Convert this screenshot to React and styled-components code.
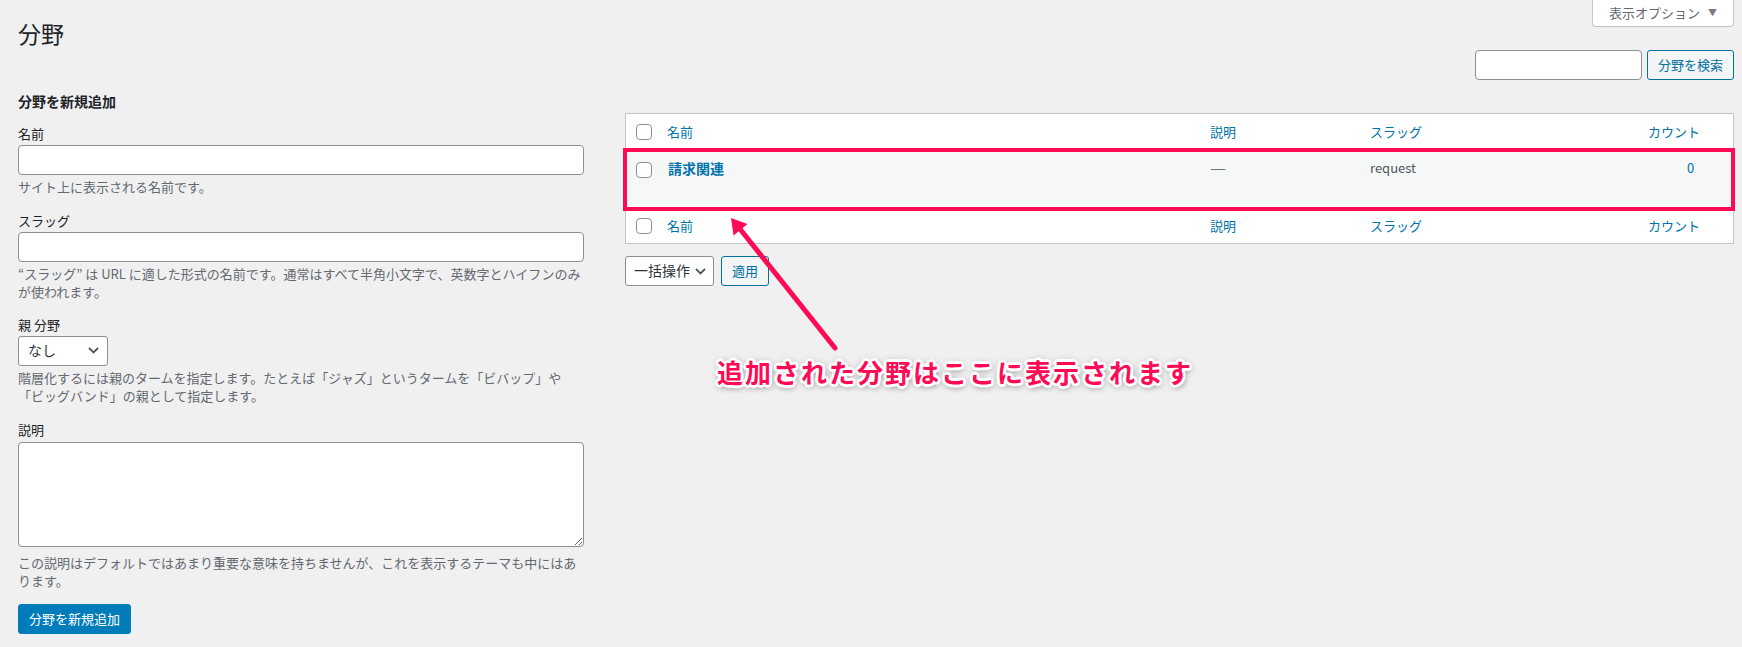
import React from 'react'
import styled, { createGlobalStyle } from 'styled-components'

const GlobalStyle = createGlobalStyle`
  html,
  body {
    margin: 0;
    padding: 0;
  }

  body {
    background: #f0f0f1;
    color: #3c434a;
    font-family: 'Noto Sans CJK JP', 'Noto Sans', sans-serif;
    font-size: 13px;
    line-height: 1.4;
  }

  * {
    box-sizing: border-box;
  }
`

const Page = styled.div`
  display: flex;
  gap: 41px;
  width: 1742px;
  height: 647px;
  padding: 0 8px 0 18px;
  overflow: hidden;
`

// left side: add-new form
const FormColumn = styled.div`
  flex: none;
  width: 566px;
  padding-top: 18px;
`

const Title = styled.h1`
  margin: 0;
  font-size: 23px;
  font-weight: 400;
  line-height: 30px;
  color: #1d2327;
`

const FormHeading = styled.h2`
  margin: 43px 0 0;
  font-size: 14px;
  font-weight: 700;
  line-height: 20px;
  color: #1d2327;
`

const Field = styled.div`
  margin-top: ${p => p.$top}px;
`

const Label = styled.label`
  display: block;
  margin-bottom: ${p => p.$gap || 1}px;
  line-height: 20px;
  color: #1d2327;
`

const TextInput = styled.input`
  display: block;
  width: 100%;
  height: 30px;
  padding: 0 8px;
  border: 1px solid #8c8f94;
  border-radius: 4px;
  background: #fff;
  font: inherit;
`

const TextArea = styled.textarea`
  display: block;
  width: 100%;
  height: 105px;
  padding: 6px 8px;
  border: 1px solid #8c8f94;
  border-radius: 4px;
  background: #fff;
  font: inherit;
  resize: vertical;
`

const Hint = styled.p`
  margin: ${p => (p.$top === undefined ? 3 : p.$top)}px 0 0;
  color: #646970;
  line-height: 18.5px;
  white-space: nowrap;
`

const Dropdown = styled.div`
  display: flex;
  align-items: center;
  justify-content: space-between;
  width: ${p => p.$width}px;
  height: 30px;
  padding: 0 ${p => p.$right || 8}px 0 ${p => p.$left || 9}px;
  border: 1px solid #8c8f94;
  border-radius: 3px;
  background: #fff;
  color: #2c3338;
  font-size: 14px;
`

const PrimaryButton = styled.button`
  margin-top: 13px;
  height: 30px;
  padding: 0 10px;
  border: 1px solid #007cba;
  border-radius: 3px;
  background: #007cba;
  color: #fff;
  font: inherit;
  line-height: 28px;
`

const SecondaryButton = styled.button`
  height: 30px;
  padding: 0 10px;
  border: 1px solid #0071a1;
  border-radius: 3px;
  background: #f3f5f6;
  color: #0071a1;
  font: inherit;
  line-height: 28px;
`

// right side: list
const ListColumn = styled.div`
  position: relative;
  flex: none;
  width: 1109px;
`

const TopBar = styled.div`
  display: flex;
  justify-content: flex-end;
`

const ScreenOptions = styled.button`
  display: flex;
  align-items: center;
  gap: 8px;
  height: 27px;
  padding: 0 16px;
  border: 1px solid #c3c4c7;
  border-top: none;
  border-radius: 0 0 4px 4px;
  background: #fff;
  color: #646970;
  font: inherit;

  span {
    font-size: 9px;
    color: #787c82;
  }
`

const SearchBox = styled.div`
  display: flex;
  justify-content: flex-end;
  gap: 5px;
  margin-top: 23px;

  input {
    width: 167px;
  }
`

const Table = styled.div`
  position: relative;
  margin-top: 33px;
  border: 1px solid #c3c4c7;
  background: #fff;
`

const Row = styled.div`
  display: grid;
  grid-template-columns: 31px 543px 160px 278px 1fr;
  align-items: ${p => (p.$body ? 'start' : 'center')};
  height: ${p => p.$height}px;
  padding-top: ${p => (p.$body ? 8 : 0)}px;
  background: ${p => (p.$body ? '#f6f7f7' : '#fff')};
  border-bottom: ${p => (p.$head ? '1px solid #c3c4c7' : 'none')};
  border-top: ${p => (p.$foot ? '1px solid #c3c4c7' : 'none')};
  line-height: 20px;
`

const Cell = styled.div`
  padding-left: ${p => p.$pad || 10}px;
  color: ${p => p.$color || '#50575e'};
  text-align: ${p => p.$align || 'left'};
`

const Dash = styled.span`
  display: inline-block;
  transform: scaleX(1.4);
  transform-origin: left center;
`

const Checkbox = styled.span`
  display: block;
  width: 16px;
  height: 16px;
  margin-top: ${p => p.$top || 0}px;
  border: 1px solid #8c8f94;
  border-radius: 4px;
  background: #fff;
`

const RowTitle = styled.a`
  font-size: 14px;
  font-weight: 700;
  color: #0073aa;
`

const BulkBar = styled.div`
  display: flex;
  gap: 7px;
  margin-top: 12px;
`

const Highlight = styled.div`
  position: absolute;
  top: 34px;
  left: -3px;
  width: 1112px;
  height: 63px;
  border: 4px solid #ff0a54;
  pointer-events: none;
`

const Arrow = styled.svg`
  position: absolute;
  left: 95px;
  top: 205px;
  overflow: visible;
`

const Callout = styled.div`
  position: absolute;
  left: 92px;
  top: 357px;
  font-size: 26px;
  font-weight: 700;
  line-height: 30px;
  letter-spacing: 2px;
  white-space: nowrap;
  color: #ff0a54;
  text-shadow:
    2px 0 0 #fff, -2px 0 0 #fff, 0 2px 0 #fff, 0 -2px 0 #fff,
    2px 2px 0 #fff, -2px -2px 0 #fff, 2px -2px 0 #fff, -2px 2px 0 #fff,
    3px 0 1px #fff, -3px 0 1px #fff, 0 3px 1px #fff, 0 -3px 1px #fff,
    1px 2px 6px rgba(0, 0, 0, 0.6), 0 0 8px rgba(0, 0, 0, 0.3);
`

const Chevron = () => (
  <svg width="11" height="7" viewBox="0 0 11 7">
    <path d="M1 1l4.5 4.5L10 1" fill="none" stroke="#50575e" strokeWidth="1.8" />
  </svg>
)

const columns = [
  { key: 'name', label: '名前' },
  { key: 'desc', label: '説明' },
  { key: 'slug', label: 'スラッグ' },
  { key: 'count', label: 'カウント' },
]

const HeaderRow = ({ foot }) => (
  <Row $height={foot ? 35 : 36} $head={!foot} $foot={foot}>
    <Cell>
      <Checkbox />
    </Cell>
    {columns.map(col => (
      <Cell key={col.key} $color="#0073aa">
        {col.label}
      </Cell>
    ))}
  </Row>
)

const App = () => (
  <>
    <GlobalStyle />
    <Page>
      <FormColumn>
        <Title>分野</Title>
        <FormHeading>分野を新規追加</FormHeading>

        <Field $top={13}>
          <Label>名前</Label>
          <TextInput type="text" />
          <Hint>サイト上に表示される名前です。</Hint>
        </Field>

        <Field $top={14}>
          <Label>スラッグ</Label>
          <TextInput type="text" />
          <Hint>
            “スラッグ” は URL に適した形式の名前です。通常はすべて半角小文字で、英数字とハイフンのみ
            <br />
            が使われます。
          </Hint>
        </Field>

        <Field $top={13}>
          <Label>親 分野</Label>
          <Dropdown $width={90}>
            なし
            <Chevron />
          </Dropdown>
          <Hint>
            階層化するには親のタームを指定します。たとえば「ジャズ」というタームを「ビバップ」や
            <br />
            「ビッグバンド」の親として指定します。
          </Hint>
        </Field>

        <Field $top={14}>
          <Label $gap={2}>説明</Label>
          <TextArea />
          <Hint $top={7}>
            この説明はデフォルトではあまり重要な意味を持ちませんが、これを表示するテーマも中にはあ
            <br />
            ります。
          </Hint>
        </Field>

        <PrimaryButton>分野を新規追加</PrimaryButton>
      </FormColumn>

      <ListColumn>
        <TopBar>
          <ScreenOptions>
            表示オプション<span>▼</span>
          </ScreenOptions>
        </TopBar>

        <SearchBox>
          <TextInput type="search" />
          <SecondaryButton>分野を検索</SecondaryButton>
        </SearchBox>

        <Table>
          <HeaderRow />
          <Row $height={58} $body>
            <Cell>
              <Checkbox $top={4} />
            </Cell>
            <Cell $pad={11}>
              <RowTitle>請求関連</RowTitle>
            </Cell>
            <Cell>
              <Dash>—</Dash>
            </Cell>
            <Cell>request</Cell>
            <Cell $color="#0073aa" $align="center">
              0
            </Cell>
          </Row>
          <HeaderRow foot />
          <Highlight />
        </Table>

        <BulkBar>
          <Dropdown $width={89} $left={8} $right={7}>
            一括操作
            <Chevron />
          </Dropdown>
          <SecondaryButton>適用</SecondaryButton>
        </BulkBar>

        <Arrow width="130" height="150" viewBox="0 0 130 150">
          <line x1="20" y1="24" x2="115" y2="143" stroke="#ff0a54" strokeWidth="5" strokeLinecap="round" />
          <polygon points="11,13 27.5,19 13.5,30.5" fill="#ff0a54" />
        </Arrow>
        <Callout>追加された分野はここに表示されます</Callout>
      </ListColumn>
    </Page>
  </>
)

export default App
